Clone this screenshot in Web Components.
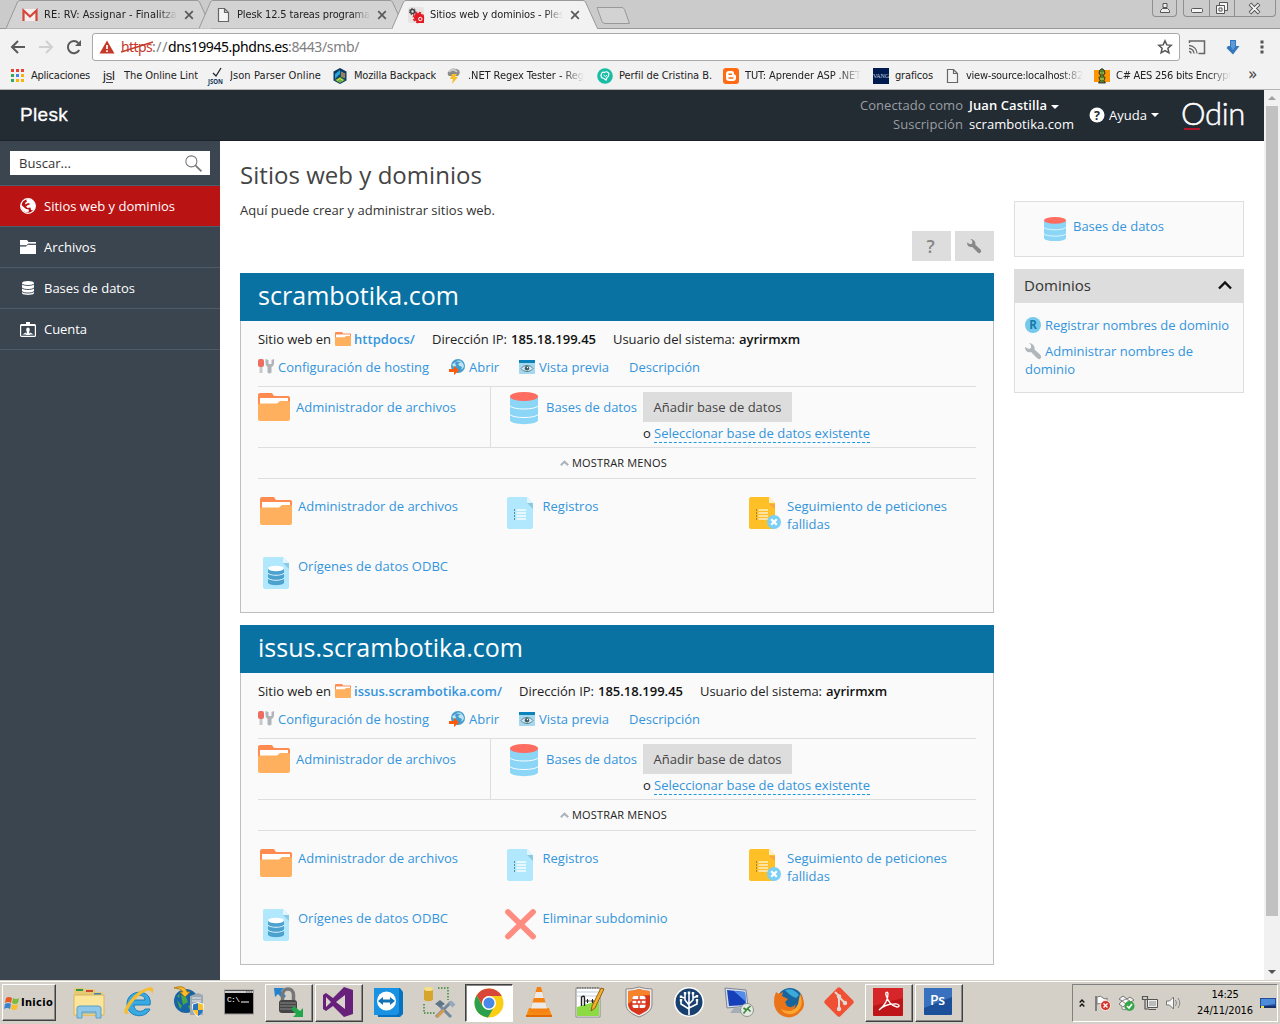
<!DOCTYPE html>
<html lang="es">
<head>
<meta charset="utf-8">
<title>Sitios web y dominios - Plesk</title>
<style>
html,body{margin:0;height:100%;overflow:hidden;background:#fff}
</style>
</head>
<body>
<desktop-screen></desktop-screen>
<script>
const ICONS = {
gmail:['0 0 16 16','<rect x="1" y="2" width="14" height="12" fill="#f4eeee"/><path d="M1.500 14V3.500l6.500 6 6.500-6V14" fill="none" stroke="#d44638" stroke-width="2.200"/>'],
page:['0 0 16 16','<path d="M3.5 1.5h6l4 4v9h-10z M9.500 1.500v4h4" fill="#f4f4f4" stroke="#666" stroke-width="1.2"/>'],
gears:['0 0 16 16','<rect width="16" height="16" rx="2" fill="#e8e4e4"/><circle cx="4.500" cy="4.500" r="2" fill="none" stroke="#444" stroke-width="1.600"/><circle cx="4.500" cy="4.500" r="3.200" fill="none" stroke="#444" stroke-width="1" stroke-dasharray="1.500 1.200"/><circle cx="10.500" cy="10.500" r="4.500" fill="#e31b23"/><circle cx="10.500" cy="10.500" r="5" fill="none" stroke="#e31b23" stroke-width="1.600" stroke-dasharray="2.200 1.700"/><path d="M9 9h7v7H9z" fill="#e31b23"/><circle cx="12.300" cy="12" r="1.700" fill="none" stroke="#fff"/>'],
close:['0 0 10 10','<path d="M1.200 1.200l7.600 7.600M8.800 1.200L1.200 8.800" stroke="#5a5a5a" stroke-width="1.700"/>'],
back:['0 0 16 16','<path d="M15 8H2.500M8 2L2 8l6 6" fill="none" stroke="#5a5a5a" stroke-width="2"/>'],
fwd:['0 0 16 16','<path d="M1 8h12.500M8 2l6 6-6 6" fill="none" stroke="#d0d0d0" stroke-width="2"/>'],
reload:['0 0 16 16','<path d="M13.200 11A6 6 0 1 1 12.300 4" fill="none" stroke="#5a5a5a" stroke-width="2"/><path d="M15 1v6H9z" fill="#5a5a5a"/>'],
warn:['0 0 16 14','<path d="M8 .5L15.500 13.500H.5z" fill="#c53929"/><path d="M8 5v4M8 10.300v1.800" stroke="#fff" stroke-width="1.700"/>'],
star:['0 0 16 16','<path d="M8 1.800l1.800 4.100 4.400.4-3.300 3 1 4.500L8 11.500l-3.900 2.300 1-4.500-3.300-3 4.400-.4z" fill="none" stroke="#555" stroke-width="1.500"/>'],
cast:['0 0 18 16','<path d="M1.500 4V2h15v12.500h-6" fill="none" stroke="#666" stroke-width="1.500"/><path d="M1 6.500a8 8 0 0 1 8 8M1 9.500a5 5 0 0 1 5 5M1 12.500a2 2 0 0 1 2 2" fill="none" stroke="#666" stroke-width="1.300"/>'],
down:['0 0 14 16','<path d="M4 1h6v6h3.500L7 15.500 .5 9l1.500-2h2z" fill="#3479bd"/><path d="M5 2h4v6l-2 3-2-3z" fill="#5c9bd5"/>'],
dots:['0 0 4 14','<path d="M.5.500h3v3h-3zM.5 5.500h3v3h-3zM.5 10.500h3v3h-3z" fill="#555"/>'],
apps:['0 0 13 13','<path d="M0 0h3v3H0zM5 0h3v3H5zM10 0h3v3h-3z" fill="#ea4335"/><path d="M0 5h3v3H0zM0 10h3v3H0z" fill="#34a853"/><path d="M5 5h3v3H5z" fill="#4285f4"/><path d="M10 5h3v3h-3zM5 10h3v3H5zM10 10h3v3h-3z" fill="#fbb30c"/>'],
jsl:['0 0 16 16','<text x="1" y="12" font-size="13" font-family="Liberation Sans" textLength="12">jsl</text><path d="M4 14.500h7" stroke="#444"/>'],
json:['0 0 16 16','<path d="M5 5l3 3 5-8" fill="none" stroke="#223" stroke-width="1.300"/><text x="0" y="15.500" font-size="6.500" font-weight="bold" font-family="Open Sans" fill="#12395c" textLength="15" lengthAdjust="spacingAndGlyphs">JSON</text>'],
moz:['0 0 16 16','<path d="M8 0l6.500 3.500v9L8 16l-6.500-3.500v-9z" fill="#113a60"/><path d="M3 11V6l5-4v4z" fill="#27a6de"/><path d="M8.500 2.500l5 3v5l-5-1z" fill="#175f96"/><path d="M10 9V4M12 10V5" stroke="#f49a28" stroke-width="1.200"/><path d="M3 12l5-3 5 3-5 3z" fill="#6eb04a"/><path d="M5 12.500l3-2 3 2" fill="none" stroke="#e9e238"/>'],
storm:['0 0 16 16','<path d="M3 8a3 3 0 0 1 0-5C5 0 8 0 10 1c4 0 5 4 2 7z" fill="#8a8a8a"/><path d="M3 4c2-3 6-3 8 0" stroke="#ccc" stroke-width="2" fill="none"/><path d="M6 6h5L9 9h3l-6 7 1-5H4z" fill="#f7bd28"/>'],
perfil:['0 0 16 16','<circle cx="8" cy="8" r="7.800" fill="#19bda5"/><path d="M4.500 5.500q1-2 3-1 2-1.500 3.500 0 1.500 1 .5 3 0 1.500-1.500 2l-1 2.500-2-1.500-2.500-1-.5-2z" fill="none" stroke="#fff" stroke-width="1.200"/><path d="M6.500 7l2 1.500L10 7" fill="none" stroke="#fff"/>'],
blogger:['0 0 16 16','<rect width="16" height="16" rx="3" fill="#ff6b12"/><path d="M6 3h2.500A2.700 2.700 0 0 1 11 6c0 1 2 .5 2 2v2a3 3 0 0 1-3 3H6a3 3 0 0 1-3-3V6a3 3 0 0 1 3-3z" fill="#fff"/><path d="M6 6.300h2.500M6 10h4" stroke="#ff6b12" stroke-width="1.400" stroke-linecap="round"/>'],
vang:['0 0 16 16','<rect width="16" height="16" fill="#001b4f"/><text x="0" y="10" fill="#c9d2e2" font-family="Liberation Serif" font-size="6" textLength="16">VANG</text>'],
goblin:['0 0 16 16','<rect y="2" width="16" height="12" fill="#ff9500"/><path d="M8 .5q3 1 3 4.500-.5 2-2 2.500l2 2-1 3 1.500 2.500h-7L6 12.500 5 9.500l2-2Q5.500 7 5 5q0-3.500 3-4.500z" fill="#557f2b" stroke="#222" stroke-width=".8"/><path d="M6 5h1.500M8.500 5H10M6 11h4" stroke="#d5e66b"/>'],
user:['0 0 12 12','<path d="M4 1.500h4v4H4zM1.500 10.500v-2l2-2h5l2 2v2z" fill="#eee" stroke="#555"/>'],
min:['0 0 12 12','<rect x=".5" y="6.500" width="11" height="4" rx="1" fill="#f5f5f5" stroke="#555"/>'],
max:['0 0 12 12','<path d="M3.500.5h8v8h-8z" fill="#f5f5f5" stroke="#555"/><path d="M.5 3.500h8v8h-8z" fill="#f5f5f5" stroke="#555"/><path d="M3 6h3v3H3z" fill="#f5f5f5" stroke="#555"/>'],
wclose:['0 0 12 12','<path d="M1 1l10 10M11 1L1 11" stroke="#555" stroke-width="4"/><path d="M1.500 1.500l9 9M10.500 1.500l-9 9" stroke="#f5f5f5" stroke-width="2"/>'],
help:['0 0 16 16','<circle cx="8" cy="8" r="7.500" fill="#fff"/><text x="8" y="12.500" font-size="12.500" font-weight="bold" text-anchor="middle" font-family="Open Sans" fill="#232b33">?</text>'],
search:['0 0 16 16','<circle cx="6" cy="6" r="5.200" fill="none" stroke="#777" stroke-width="1"/><path d="M9.800 9.800L15.500 15.500" stroke="#777" stroke-width="1.600"/>'],
globe:['0 0 16 16','<circle cx="8" cy="8" r="7.300" fill="none" stroke="#fff" stroke-width="1.300"/><path d="M6 1.500Q10 0 13 3q3 3 2 7l-2 2.500-2-.5-.5-2.500-3 .5-1.500-1.500 2-1.500 2-.5-1-1.500-2 .5-1.500 1-.5-1.500 2-1.500z M1 6.500l2 2 3 2.500 3 .5-.5 2.500-2 .5Q2 13 1 9z" fill="#fff"/>'],
wfolder:['0 0 16 14','<path d="M0 0h7l1.500 2H16v2H9L7 6H0z" fill="#fff"/><path d="M0 6.500h6l2-1.700h8V14H0z" fill="#fff"/><path d="M0 5.600h6.500l1.500-1.500h8" fill="none" stroke="#3a4550" stroke-width=".9"/>'],
wdb:['0 0 12 14','<path d="M0 2v10c0 2.500 12 2.500 12 0V2z" fill="#fff"/><ellipse cx="6" cy="2" rx="6" ry="2" fill="#fff"/><path d="M0 3c2 2 10 2 12 0M0 7c2 2 10 2 12 0M0 10.500c2 2 10 2 12 0" fill="none" stroke="#3a4550" stroke-width=".9"/>'],
badge:['0 0 16 15','<path d="M6 0h4v4H6z" fill="#fff"/><rect x=".6" y="2.600" width="14.800" height="11.800" rx="1" fill="none" stroke="#fff" stroke-width="1.200"/><path d="M1 2h14v2H1z" fill="#fff"/><path d="M8 5.500c2 0 2.300 3 1 4.500l1.500 3h-5L7 10c-1.300-1.500-1-4.500 1-4.500z" fill="#fff"/><path d="M2.500 12.500l3-2 1 2zM13.500 12.500l-3-2-1 2z" fill="#fff"/>'],
folder:['0 0 32 28','<path d="M0 2a2 2 0 0 1 2-2h12l2 3h14a2 2 0 0 1 2 2v9H0z" fill="#ff8b50"/><path d="M2 5h28v8H2z" fill="#fff"/><path d="M0 11.500l1-1h18l3-2.500h9l1 1V26a2 2 0 0 1-2 2H2a2 2 0 0 1-2-2z" fill="#ffb05e"/>'],
db:['0 0 28 32','<path d="M0 4v24c0 5.500 28 5.500 28 0V4z" fill="#8bd5f7"/><ellipse cx="14" cy="4.500" rx="14" ry="4.500" fill="#ff6c60"/><path d="M0 14c3 4 25 4 28 0M0 22.500c3 4 25 4 28 0" fill="none" stroke="#f7fcff" stroke-width="1"/>'],
doc:['0 0 26 32','<path d="M2 0h18l6 6v24a2 2 0 0 1-2 2H2a2 2 0 0 1-2-2V2a2 2 0 0 1 2-2z" fill="#b2e8fe"/><path d="M20 0l6 6h-6z" fill="#e0f5fd"/><path d="M20 6h6v6z" fill="#8bc9e2"/><path d="M9.500 13h9.500M9.500 16h9.500M9.500 19h9.500M9.500 22h9.500" stroke="#e7f8fe" stroke-width="1.800"/><path d="M7.500 12v12" stroke="#5d8fa3" stroke-dasharray="2 1"/>'],
odbc:['0 0 26 32','<path d="M2 0h18l6 6v24a2 2 0 0 1-2 2H2a2 2 0 0 1-2-2V2a2 2 0 0 1 2-2z" fill="#b2e8fe"/><path d="M20 0l6 6h-6z" fill="#e0f5fd"/><path d="M20 6h6v6z" fill="#8bc9e2"/><path d="M5 11v14.500c0 3.500 16 3.500 16 0V11z" fill="#4ba2cf"/><ellipse cx="13" cy="11.500" rx="8" ry="2.700" fill="#fff"/><path d="M5 16c2 3 14 3 16 0M5 21c2 3 14 3 16 0" fill="none" stroke="#e7f8fe" stroke-width="1.100"/>'],
track:['0 0 32 32','<path d="M2 0h18l6 6v24a2 2 0 0 1-2 2H2a2 2 0 0 1-2-2V2a2 2 0 0 1 2-2z" fill="#ffc027"/><path d="M20 0l6 6h-6z" fill="#fff1cb"/><path d="M20 7h6v5z" fill="#f7a540"/><path d="M9.500 13h9.500M9.500 16h9.500M9.500 19h9.500M9.500 22h9.500" stroke="#ffe3a0" stroke-width="1.800"/><path d="M7.500 12v12" stroke="#a98332" stroke-dasharray="2 1"/><circle cx="25" cy="25" r="7" fill="#79cff4"/><path d="M22.200 22.200l5.600 5.600M27.800 22.200l-5.600 5.600" stroke="#fff" stroke-width="2.300"/>'],
remove:['0 0 32 32','<path d="M4 3l25 24.500M29 3L4 27.500" stroke="#ff8c80" stroke-width="5.800" stroke-linecap="round"/>'],
tools:['0 0 16 16','<path d="M0 2q0-2 2-2h2q2 0 2 2v4q0 2-2 2H2Q0 8 0 6z" fill="#ed6d61"/><path d="M1.500 8h3v6h-3z" fill="#c6cacd"/><path d="M7.500 0v4c0 2 1 3 2 4v5.500q2 2 4 0V8c2-1 2.500-2 2.500-4V0l-2.500 1v4h-3V1z" fill="#aeb4b9"/>'],
open:['0 0 16 16','<circle cx="9" cy="7" r="7" fill="#459ccb"/><path d="M7 2.500q3-2 6 .5l-2 .5-2 1.500 1 1.500 3 1.500-1 3q3-2 3-4-1-4-3-4M3.500 5Q3 8 6 7.500l1.500-1-1.500-1.500 1-2z" fill="#bce4f5"/><path d="M0 10h5V7l5 4.500L5 16v-3H0z" fill="#ff5b0b"/>'],
preview:['0 0 16 14','<rect width="16" height="14" rx="1" fill="#a3d8ee"/><path d="M0 0h16v3H0z" fill="#0c83ba"/><path d="M2 8.500c3-4 9-4 12 0-3 4-9 4-12 0z" fill="#d8eef7" stroke="#5f7d8a"/><circle cx="8" cy="8.300" r="2.300" fill="#3b5c6b"/><circle cx="8.500" cy="7.500" r=".7" fill="#fff"/>'],
wrench:['0 0 16 16','<path d="M4 0l2 2v3L4 6 0 4c0 4 3 6 6 5l6 6q2 2 3.500.5t0-3.500L9.500 6.500C10.500 3 7 0 4 0z"/>'],
up:['0 0 14 10','<path d="M1 8.500l6-6 6 6" fill="none" stroke="#111" stroke-width="2.400"/>'],
smallup:['0 0 9 6','<path d="M.8 5.200l3.700-3.500 3.700 3.500" fill="none" stroke="#abb4bb" stroke-width="2"/>'],
reg:['0 0 16 16','<circle cx="8" cy="8" r="8" fill="#75c9ec"/><text x="8" y="12" font-family="Open Sans" font-size="11.500" font-weight="bold" text-anchor="middle" fill="#147baa">R</text>'],
win:['0 0 16 16','<path d="M2 3q3-2 6 0L7 8Q4 6 1 8z" fill="#e95827"/><path d="M9 3q3 2 6 0l-1 5q-3 2-6 0z" fill="#7aba3c"/><path d="M1 9q3-2 6 0l-1 5q-3-2-6 0z" fill="#3d82cf"/><path d="M8 9q3 2 6 0l-1 5q-3 2-6 0z" fill="#fabe2a"/>'],
explorer:['0 0 32 32','<path d="M1 5l1-3h9l2 3V3h8l2 3h7v24H1z" fill="#e7c873"/><path d="M3 3h7v2H3z" fill="#31994a"/><path d="M13 4h7v2h-7z" fill="#c64a35"/><path d="M21 7h7v2h-7z" fill="#3e86bc"/><path d="M1 9h30v20H1z" fill="#fae59b" stroke="#d9b762"/><path d="M4 32V22q0-2 3-2h18q3 0 3 2v10h-5v-6H9v6z" fill="#8fc8e8" stroke="#5d9fc8"/><path d="M9 27h14" stroke="#5d9fc8"/>'],
ie:['0 0 32 32','<path d="M27 19H11c0 7 8 8 11 4h5C22 34 4 31 4 18S21 3 26 11q2 4 1 8z M11 14h11c0-6-10-7-11 0z" fill="#39a9e2" stroke="#1680bc" fill-rule="evenodd"/><path d="M3 28C-3 27 9 6 24 2c6-2 8 1 5 6 0-9-16 1-23 14-2 4-2 7 2 5z" fill="#f5bd31"/>'],
iis:['0 0 32 32','<circle cx="13" cy="15" r="12" fill="#1965a4"/><path d="M8 9l5 2 2 5-5 3zM4 14l5 6-2 3zM15 20l6-2-3 8zM4 10l3-2-1 4z" fill="#48a54a"/><path d="M1 2c8-3 12 0 13 4h3l-5 5-5-5h3C9 4 5 2 1 2z" fill="#f8bc2c" stroke="#b47a0e"/><path d="M17 10l8-3 5 2v20H17z" fill="#9ea9b2"/><path d="M19 12h9M19 15h9" stroke="#e5eaee"/><path d="M19 18l6-2 6 2c0 7-2 10-6 13-4-3-6-6-6-13z" fill="#fff"/><path d="M25 17l5 1.500V24h-5z M20 24h5v6c-3-2-4-4-5-6z" fill="#f9c22b"/><path d="M25 17l-5 1.500V24h5z M25 24h5c0 2-2 5-5 6z" fill="#2874c2"/>'],
cmd:['0 0 32 32','<rect x="1.500" y="4" width="29" height="24" fill="#000" stroke="#999"/><path d="M2 5h28v2H2z" fill="#ccc"/><path d="M23 6h6" stroke="#555" stroke-dasharray="1.500 .8"/><text x="4" y="16" font-size="8" fill="#fff" font-family="Liberation Mono" textLength="13">C:\\</text><path d="M18 16h8" stroke="#fff"/>'],
lock:['0 0 32 32','<path d="M2 2h10l-3 3 5 5-3 3-5-5-3 3z" fill="#2482ce"/><path d="M10.500 16V9c0-8 11-8 11 0v7" fill="none" stroke="#777" stroke-width="3.500"/><rect x="7" y="14" width="18" height="13" rx="3" fill="#454545"/><path d="M8 17h16M8 20h16M8 23h16" stroke="#888"/><path d="M31 31H21l3-3-5-5 3-3 6 5 3-3z" fill="#22a64b"/>'],
vs:['0 0 32 32','<path d="M22 1l9 3v24l-9 3L11 20l-7 5-3-2V9l3-2 7 5z" fill="#68217a"/><path d="M4 11v10l5-5zM14 16l9-7v14z" fill="#d9d4cd"/>'],
tv:['0 0 32 32','<path d="M2 2h25l3 4v22l-3 3H5z" fill="#0772c0"/><path d="M1 2h25v25l-3 2H1z" fill="#1a92e4"/><circle cx="13.500" cy="15" r="9.500" fill="#fff"/><path d="M5 15l5-4v2.500h7V11l5 4-5 4v-2.500h-7V19z" fill="#1272b3"/>'],
dbtools:['0 0 32 32','<path d="M1 3v10c0 3 9 3 9 0V3z" fill="#d6a62c"/><ellipse cx="5.500" cy="3" rx="4.500" ry="2" fill="#f7e085"/><path d="M15 2h10v12M1 18v9h12" fill="none" stroke="#33852f" stroke-width="1.400" stroke-dasharray="1.500 1.500"/><path d="M14 17l14 14M28 16L13 31" stroke="#73889a" stroke-width="3"/><path d="M12 18l5-4 5 4-5 3z" fill="#5c7688"/><path d="M27 16l4 4" stroke="#93a8b8" stroke-width="4"/><path d="M21 24l-7 7" stroke="#d99a51" stroke-width="3"/>'],
chrome:['0 0 32 32','<circle cx="16" cy="16" r="14.500" fill="#fbcd14"/><path d="M16 1.500A14.500 14.500 0 0 1 28.700 9H16a7 7 0 0 0-6 10L3.500 8.500A14.500 14.500 0 0 1 16 1.500z" fill="#d9463a"/><path d="M3.500 8.500A14.500 14.500 0 0 0 15 30.400l6.300-11a7 7 0 0 1-11.500-.4z" fill="#2ba14e"/><circle cx="16" cy="16" r="7" fill="#fff"/><circle cx="16" cy="16" r="5.500" fill="#4888e8"/>'],
vlc:['0 0 32 32','<path d="M6 22h20l3 8-1 1H4l-1-1z" fill="#f58b13"/><path d="M14 1h4l7 24c-4 3-14 3-18 0z" fill="#f58213"/><path d="M12.700 6h6.600l1.700 6H11zM9.500 16.500h13l1.700 6H7.800z" fill="#eceae6"/><path d="M3 30h26" stroke="#e36b05" stroke-width="2"/>'],
npp:['0 0 32 32','<path d="M3 2h24v29H3z" fill="#fff" stroke="#888"/><path d="M4 6h22M4 10h22" stroke="#bfcfda"/><path d="M4 21q11-3 22-7v16H4z" fill="#8ddb42"/><path d="M4 2h22" stroke="#555" stroke-dasharray="1.500 1"/><path d="M8.500 20V11q3-2 3 1v8" fill="none" stroke="#222" stroke-width="1.400"/><path d="M12.500 15h4m-2-2v4M17.500 15h4m-2-2v4" stroke="#222"/><path d="M18 25l1-5L28 2l3 1-9 19z" fill="#f3b12d" stroke="#975e13"/>'],
shield:['0 0 32 32','<path d="M16 1q6 2 13 2v15c0 7-6 10-13 13C9 28 3 25 3 18V3q7 0 13-2z" fill="#eee" stroke="#888"/><path d="M16 3q5 2 11 2v13c0 6-5 8-11 11C10 26 5 24 5 18V5q6 0 11-2z" fill="#d8361c"/><path d="M5 5q6 0 11-2 5 2 11 2v4Q15 9 5 18z" fill="#f5832b"/><rect x="9.500" y="10" width="13" height="12" rx="2" fill="#fff"/><path d="M9 14h14M9 18h14M14 14v4M18 14v4M16 10v4M16 18v4" stroke="#d8361c" stroke-width="1.300"/>'],
tree:['0 0 32 32','<circle cx="16" cy="16" r="15" fill="#fff"/><circle cx="16" cy="16" r="13.500" fill="#17406f"/><path d="M16 29V16M16 22l8-4v-4M16 18l4-4V7M16 23l-8-5v-4M16 19l-4-5V7M12 12l-4-1M20 12l4-2M16 16V7" fill="none" stroke="#fff" stroke-width="1.600"/><path d="M14.800 5.500h2.400v2.400h-2.400zM10.800 6h2.400v2.400h-2.400zM18.800 6h2.400v2.400h-2.400zM6.800 13h2.400v2.400H6.800zM22.800 13h2.400v2.400h-2.400zM6.800 9.500h2.400v2.400H6.800zM22.800 9h2.400v2.400h-2.400z" fill="#fff"/>'],
remote:['0 0 32 32','<path d="M2 2l21 2 2 16-21 2z" fill="#d8dee6" stroke="#79859b"/><path d="M4 4l18 2 1 13-17 1z" fill="#1540ba"/><path d="M11 5l11 1 1 10z" fill="#548ceb"/><path d="M11 22h7l4 5H7z" fill="#a6adb7"/><circle cx="24" cy="24" r="6.500" fill="#e5e8e4" stroke="#8a9588"/><path d="M20.500 22l3 2-3 3.500M27.500 20l-3 2.500 3 3" fill="none" stroke="#358735" stroke-width="1.600"/>'],
firefox:['0 0 32 32','<circle cx="17" cy="15" r="13" fill="#18659d"/><path d="M12 4q8-3 14 5l-3 3q-7-3-11-8z" fill="#3baada"/><path d="M3 6l3 2 4-2-1 4 6 3-3 3 2 4q5 3 9-2l-2 6q8-3 6-17 8 12 0 19C18 37 1 30 1 16q0-6 2-10z" fill="#ea7419"/><path d="M27 8q5 13-5 19c-6 3-12 0-14-4q12 6 17-5z" fill="#fba62f"/>'],
git:['0 0 32 32','<rect x="5" y="5" width="22" height="22" rx="2" fill="#f05033" transform="rotate(45 16 16)"/><path d="M12 6l4 4v13M16 11l6 6" fill="none" stroke="#dedbd3" stroke-width="2"/><circle cx="16" cy="10.500" r="2.200" fill="#dedbd3"/><circle cx="22" cy="17" r="2.200" fill="#dedbd3"/><circle cx="16" cy="23" r="2.200" fill="#dedbd3"/>'],
acrobat:['0 0 32 32','<rect x="1" y="2" width="30" height="28" rx="1" fill="#bd1518"/><path d="M1 2h30v10L1 20z" fill="#d6262a"/><path d="M7 24c5-4 9-10 9-16 0-3-3-2-2 1 2 7 6 11 11 12 4 0 2-4-3-3-6 0-11 2-15 6z" fill="none" stroke="#fff" stroke-width="1.300"/>'],
ps:['0 0 32 32','<rect x="2" y="2" width="28" height="27" rx="1" fill="#1b4f9a"/><path d="M2 2h28v9L2 22z" fill="#3871bd"/><text x="8" y="19" font-size="14" font-family="Open Sans" font-weight="600" fill="#fff" textLength="15">Ps</text>'],
chev:['0 0 6 10','<path d="M.7 4.500L3 2l2.300 2.500M.7 8.500L3 6l2.300 2.500" fill="none" stroke="#111" stroke-width="1.400"/>'],
flag:['0 0 17 16','<path d="M2 1v15" stroke="#666" stroke-width="1.500"/><path d="M3 2q4-2 6 1 2 2 4 0v7q-3 2-5-1-2-1-5 0z" fill="#fff" stroke="#777"/><circle cx="11.500" cy="10.500" r="5" fill="#d6342c" stroke="#fff" stroke-width=".8"/><path d="M9.500 8.500l4 4M13.500 8.500l-4 4" stroke="#fff" stroke-width="1.400"/>'],
dropbox:['0 0 17 16','<path d="M5 1L1 4l3 2-3 3 4 3 4-3 4 3v-5l3-2-4-3-3 2z" fill="#f2f2f2" stroke="#777"/><path d="M4 6l4-2 4 2-4 3zM4 11v3l4 1" fill="#fff" stroke="#888"/><circle cx="11.500" cy="11" r="5" fill="#35a749"/><path d="M9 11l2 2 3-4" fill="none" stroke="#fff" stroke-width="1.600"/>'],
net:['0 0 16 16','<path d="M5.500 4.500h10v8h-10z" fill="#eee" stroke="#555"/><path d="M7 6h7v5H7z" fill="#bbb"/><path d="M.500 1.500h5v3h-5zM3 4v10h4M7 14.500h7" fill="none" stroke="#555" stroke-width="1.200"/>'],
sound:['0 0 17 16','<path d="M1.500 6h3l4-4v12l-4-4h-3z" fill="#f7f7f7" stroke="#777"/><path d="M10.500 5q2 3 0 6M13 3q3.500 5 0 10" fill="none" stroke="#888"/>'],
show:['0 0 16 12','<path d="M0 1h16v10H0z" fill="#244e9b"/><path d="M1 2h14v5L1 9z" fill="#4c8cd8"/><path d="M0 10h16" stroke="#163166" stroke-width="2"/><path d="M1 9h3v2H1z" fill="#f5dc4d"/>']
};

/* Registers a custom element whose shadow root holds fixed CSS and markup. */
const make = (name, css, html) => customElements.define(name, class extends HTMLElement {
  constructor(){
    super();
    this.attachShadow({mode:'open'});
  }
  connectedCallback(){
    if (this.ready) return;
    this.ready = true;
    const body = typeof html === 'function' ? html(k => this.getAttribute(k) || '', this) : html;
    this.shadowRoot.innerHTML = `<style>*{box-sizing:border-box}:host{box-sizing:border-box}${css}</style>${body}`;
  }
});
const icon = (n, w, h = w) => `<ui-icon name="${n}" style="width:${w}px;height:${h}px"></ui-icon>`;

make('ui-icon', ':host{display:inline-block;flex:none}svg{display:block;width:100%;height:100%;overflow:visible}', a => {
  const [vb, body] = ICONS[a('name')];
  return `<svg viewBox="${vb}" preserveAspectRatio="none" fill="currentColor">${body}</svg>`;
});

/* ---------- Browser chrome ---------- */
make('browser-tab', `
:host{display:block;position:relative;width:193px;height:29px;flex:none}
:host([active]){z-index:2}
.bg{position:absolute;left:0;top:0;width:206px;height:29px}
.row{position:relative;display:flex;align-items:center;height:28px;padding:1px 0 0 16px}
.t{margin-left:6px;width:133px;overflow:hidden;-webkit-mask:linear-gradient(90deg,#000 115px,transparent 133px);margin-right:7px}`,
a => `<svg class="bg" viewBox="0 0 206 29"><path d="M0 28.500 11.500 2Q12.500 .5 14 .5H191Q192.500 .5 193.500 2L205.500 28.500" fill="${a('active')?'#f2f2f2':'#d3d3d3'}" stroke="#999"/>${a('active')?'<path d="M1 28.500h204" stroke="#f2f2f2" stroke-width="1.500"/>':''}</svg>
<div class="row">${icon(a('icon'),16)}<div class="t"><slot></slot></div>${icon('close',10)}</div>`);

make('window-buttons', `
:host{display:flex;height:17px}
div{height:17px;border:1px solid #8f8f8f;border-top:0;border-radius:0 0 4px 4px;display:flex;align-items:center;justify-content:center}
.u{width:25px;margin-right:6px}.g{width:93px;justify-content:stretch}
.g span{display:flex;align-items:center;justify-content:center;height:16px}
.g span+span{border-left:1px solid #8f8f8f}`,
`<div class="u">${icon('user',12)}</div><div class="g"><span style="width:25px">${icon('min',12)}</span><span style="width:25px">${icon('max',12)}</span><span style="flex:1;padding-right:2px">${icon('wclose',11)}</span></div>`);

make('tab-strip', `
:host{display:flex;height:29px;background:#cbcbcb;padding-left:6px;border-bottom:1px solid #999;font-size:11px}
.new{margin:7px 0 0 10px;width:36px;height:18px}
window-buttons{margin-left:auto;margin-right:4px}`,
`<browser-tab icon="gmail"><fit-text w="133">RE: RV: Assignar - Finalitza</fit-text></browser-tab>
<browser-tab icon="page"><fit-text w="133">Plesk 12.5 tareas programa</fit-text></browser-tab>
<browser-tab icon="gears" active="1"><fit-text w="134">Sitios web y dominios - Ples</fit-text></browser-tab>
<svg class="new" viewBox="0 0 36 18"><path d="M2 .5H27q1.500 0 2.500 2L34.500 16.500H10q-2 0-3-2z" fill="#d3d3d3" stroke="#999"/></svg>
<window-buttons></window-buttons>`);

make('address-bar', `
:host{display:flex;align-items:center;height:35px;padding:0 16px 0 10px;background:#f2f2f2}
.nav{display:flex;gap:12px;width:82px}
.url{display:flex;align-items:center;width:1088px;height:28px;margin-top:1px;border:1px solid #a9a9a9;border-radius:3px;background:#fff;padding:0 6px;font:14px/26px "Noto Sans",sans-serif;color:#808080}
.h{position:relative;margin-left:6px;color:#c53929}.h svg{position:absolute;left:0;top:6px;width:32px;height:14px}
b{font-weight:400;color:#000}
.star{margin-left:auto;display:flex}
.r{display:flex;align-items:center;justify-content:space-between;margin-left:8px;width:76px}`,
`<div class="nav">${icon('back',16)}${icon('fwd',16)}${icon('reload',16)}</div>
<div class="url">${icon('warn',16,14)}<span class="h"><fit-text w="31">https</fit-text><svg viewBox="0 0 32 14"><path d="M0 12L32 2" stroke="#c53929" stroke-width="1.500"/></svg></span><fit-text w="16">://</fit-text><b><fit-text w="120">dns19945.phdns.es</fit-text></b><fit-text w="71">:8443/smb/</fit-text><span class="star">${icon('star',16)}</span></div>
<div class="r">${icon('cast',18,16)}${icon('down',14,16)}${icon('dots',4,14)}</div>`);

make('book-mark', `:host{display:flex;align-items:center;height:24px}
ui-icon{margin-top:-1px}
span{margin:-2px 0 0 6px;overflow:hidden;white-space:nowrap}
:host([icon=apps]) span{margin-left:7px}
:host([fade]) span{-webkit-mask:linear-gradient(90deg,#000 calc(100% - 22px),transparent)}`,
a => `${icon(a('icon'),a('icon')==='apps'?13:16)}<span><slot></slot></span>`);

make('bookmarks-bar', `
:host{display:flex;height:26px;background:#f2f2f2;border-bottom:1px solid #b4b4b4;font-size:11px;padding-left:11px}
book-mark{flex:none}
.more{font-size:17px;line-height:20px;margin-left:17px;color:#444}`,
[['apps','Aplicaciones',59,0,91],['jsl','The Online Lint',74,0,106],['json','Json Parser Online',91,0,124],['moz','Mozilla Backpack',82,0,114],['storm','.NET Regex Tester - Reg',116,1,151],['perfil','Perfil de Cristina B.',93,0,126],['blogger','TUT: Aprender ASP .NET',116,1,150],['vang','graficos',38,0,71],['page','view-source:localhost:82',117,1,150],['goblin','C# AES 256 bits Encrypt',116,1,137]]
.map(b => `<book-mark icon="${b[0]}" ${b[3]?'fade':''} style="width:${b[4]}px"><fit-text w="${b[2]}">${b[1]}</fit-text></book-mark>`).join('')+'<span class="more">»</span>');

/* ---------- Plesk ---------- */
make('plesk-header', `
:host{display:flex;height:51px;background:#232b33;border-bottom:1px solid #1c2129;color:#fff;padding-left:20px;align-items:center}
.logo{font:19px "Liberation Sans",sans-serif;margin-top:-1px;-webkit-text-stroke:.3px #fff}
.acc{margin-left:auto;display:grid;grid-template-columns:103px 105px;column-gap:6px;line-height:19px}
.acc span{color:#9a9fa3;text-align:right}
.help{display:flex;align-items:center;margin-left:15px;width:92px}
.help ui-icon{margin-right:4px}
i{display:inline-block;border:4px solid transparent;border-top-color:#fff;border-bottom:0;margin-left:4px;vertical-align:1px}
.odin{width:83px;height:40px;position:relative;font:300 31px/37px Lato,sans-serif;-webkit-text-stroke:.5px #fff}
.odin u{position:absolute;left:3px;top:33px;width:16px;height:2px;background:#b2142c}`,
`<span class="logo"><fit-text w="48">Plesk</fit-text></span>
<div class="acc"><span><fit-text w="103">Conectado como</fit-text></span><div style="font-weight:600"><fit-text w="78">Juan Castilla</fit-text><i></i></div><span><fit-text w="70">Suscripción</fit-text></span><div style="font-weight:500"><fit-text w="105">scrambotika.com</fit-text></div></div>
<div class="help">${icon('help',16)}<fit-text w="38">Ayuda</fit-text><i></i></div>
<div class="odin"><fit-text w="64">Odin</fit-text><u></u></div>`);

make('nav-item', `
:host{display:flex;align-items:center;height:41px;padding-left:20px;border-bottom:1px solid #4d5c6a;color:#fff;font-weight:500}
:host([active]){background:#ba1313}
span{width:16px;margin-right:8px;display:flex;justify-content:center}`,
a => `<span>${icon(a('icon'),+a('iw'),+a('ih'))}</span><slot></slot>`);

make('side-bar', `
:host{display:block;width:220px;background:#3a4550;padding-top:10px;flex:none}
.s{display:flex;align-items:center;justify-content:space-between;margin:0 10px 10px;height:24px;background:#fff;padding:0 8px 0 9px;color:#333}
nav{border-top:1px solid #4d5c6a}`,
`<div class="s"><fit-text w="52">Buscar...</fit-text>${icon('search',17)}</div>
<nav><nav-item active="1" icon="globe" iw="16" ih="16"><fit-text w="131">Sitios web y dominios</fit-text></nav-item>
<nav-item icon="wfolder" iw="16" ih="14"><fit-text w="52">Archivos</fit-text></nav-item>
<nav-item icon="wdb" iw="12" ih="14"><fit-text w="91">Bases de datos</fit-text></nav-item>
<nav-item icon="badge" iw="16" ih="15"><fit-text w="43">Cuenta</fit-text></nav-item></nav>`);

make('tool-tile', `
:host{display:flex;height:60px;color:#3495dc}
.i{width:32px;margin-right:6px;display:flex;justify-content:center;align-items:flex-start}
:host([icon=doc]) .i,:host([icon=remove]) .i{margin-right:6.500px}
.t{line-height:18px}`,
a => `<div class="i">${icon(a('icon'),+a('iw'),+a('ih'))}</div><div class="t"><slot></slot></div>`);

make('domain-panel', `
:host{display:block;width:754px;height:340px;margin-bottom:12px;background:#fafafa;border:1px solid #bfbfbf;border-top:0}
header{height:48px;margin:0 -1px;background:#0972a3;color:#fff;font-size:25px;line-height:45px;padding-left:18px}
.b{padding:0 17px}
.r{display:flex;align-items:center;height:28px;white-space:pre}
.r1{margin-top:4px}.r1>ui-icon{margin:0 3px 0 4px}
a{color:#3495dc;text-decoration:none}
b{font-weight:600;color:#111;margin-left:4px}
.l{display:flex;align-items:center;gap:4px;margin-right:20px}
.l ui-icon{margin-top:-1px}
.main{display:flex;height:62px;margin-top:5px;border:1px solid #dedede;border-width:1px 0}
.m1{display:flex;width:233px;border-right:1px solid #dedede;padding-top:6px}
.m1 a{margin:5px 0 0 6px}
.m2{display:flex;padding:5px 0 0 19px}
.m2>a{margin:6px 6px 0 8px}
.btn{display:flex;align-items:center;justify-content:center;width:149px;height:30px;background:#ddd;color:#444}
.or{line-height:18px;margin-top:2px;display:flex;gap:4px}
.or a{border-bottom:1px dashed #1b9ae0}
.less{height:31px;border-bottom:1px solid #dedede;display:flex;align-items:center;justify-content:center;gap:3px;font-size:11px;color:#222;padding:0 7px 2px 0}
.less ui-icon{margin-top:2px}
.grid{display:grid;grid-template-columns:244px 245px 1fr;padding:18px 0 0 2px}`,
a => `<header><fit-text w="${a('tw')}">${a('name')}</fit-text></header><div class="b">
<div class="r r1"><fit-text w="73">Sitio web en</fit-text>${icon('folder',16,14)}<a style="font-weight:600"><fit-text w="${a('pw')}">${a('path')}</fit-text></a><span style="width:17px"></span><fit-text w="75">Dirección IP:</fit-text><b><fit-text w="85">185.18.199.45</fit-text></b><span style="width:17px"></span><fit-text w="122">Usuario del sistema:</fit-text><b><fit-text w="61">ayrirmxm</fit-text></b></div>
<div class="r"><a class="l">${icon('tools',16)}<fit-text w="151">Configuración de hosting</fit-text></a><a class="l">${icon('open',16)}<fit-text w="30">Abrir</fit-text></a><a class="l">${icon('preview',16,14)}<fit-text w="70">Vista previa</fit-text></a><a><fit-text w="71">Descripción</fit-text></a></div>
<div class="main"><div class="m1">${icon('folder',32,28)}<a><fit-text w="160">Administrador de archivos</fit-text></a></div>
<div class="m2">${icon('db',28,32)}<a><fit-text w="91">Bases de datos</fit-text></a><div><div class="btn"><fit-text w="128">Añadir base de datos</fit-text></div><div class="or"><fit-text w="7">o</fit-text><a><fit-text w="216">Seleccionar base de datos existente</fit-text></a></div></div></div></div>
<div class="less">${icon('smallup',9,6)}<fit-text w="95">MOSTRAR MENOS</fit-text></div>
<div class="grid"><tool-tile icon="folder" iw="32" ih="28"><fit-text w="160">Administrador de archivos</fit-text></tool-tile>
<tool-tile icon="doc" iw="26" ih="32"><fit-text w="56">Registros</fit-text></tool-tile>
<tool-tile icon="track" iw="32" ih="32"><fit-text w="160">Seguimiento de peticiones</fit-text><br><fit-text w="43">fallidas</fit-text></tool-tile>
<tool-tile icon="odbc" iw="26" ih="32"><fit-text w="150">Orígenes de datos ODBC</fit-text></tool-tile>
${a('sub')?'<tool-tile icon="remove" iw="32" ih="32"><fit-text w="125">Eliminar subdominio</fit-text></tool-tile>':''}</div></div>`);

make('page-main', `
:host{display:block;width:774px;padding:20px 0 0 20px;flex:none}
h1{margin:0;font-size:24px;font-weight:400;line-height:28px;color:#444}
p{margin:12px 0;line-height:18px;height:18px;color:#333}
.tools{display:flex;justify-content:flex-end;gap:4px;height:30px;margin-bottom:12px;color:#888}
.tools div{width:39px;height:30px;background:#ddd;display:flex;align-items:center;justify-content:center;font-size:18px;font-weight:600;padding-right:2px}`,
`<h1><fit-text w="242">Sitios web y dominios</fit-text></h1><p><fit-text w="255">Aquí puede crear y administrar sitios web.</fit-text></p>
<div class="tools"><div>?</div><div>${icon('wrench',14)}</div></div>
<domain-panel name="scrambotika.com" tw="201" path="httpdocs/" pw="61"></domain-panel>
<domain-panel name="issus.scrambotika.com" tw="265" path="issus.scrambotika.com/" pw="148" sub="1"></domain-panel>`);

make('side-panel', `
:host{display:block;width:230px;margin:60px 0 0 20px;color:#3495dc;line-height:18px}
.a{display:flex;height:56px;border:1px solid #dedede;background:#fafafa;padding:15px 0 0 29px;margin-bottom:12px}
.a fit-text{margin:0 0 0 7px}
.h{display:flex;height:34px;background:#ddd;color:#333;font-size:15px;align-items:center;justify-content:space-between;padding:0 12px 2px 10px}
.c{height:90px;border:1px solid #dedede;border-top:0;background:#fafafa;padding:13px 0 0 10px}
.c div{margin-bottom:8px;white-space:nowrap}.c ui-icon{vertical-align:-3px;margin-right:4px}`,
`<div class="a">${icon('db',22,24)}<fit-text w="91">Bases de datos</fit-text></div>
<div class="h"><fit-text w="67">Dominios</fit-text>${icon('up',14,10)}</div>
<div class="c"><div>${icon('reg',16)}<fit-text w="184">Registrar nombres de dominio</fit-text></div><div><span style="color:#b0b6bb">${icon('wrench',16)}</span><fit-text w="148">Administrar nombres de</fit-text><br><fit-text w="50">dominio</fit-text></div></div>`);

make('scroll-bar', `
:host{display:flex;flex-direction:column;align-items:center;justify-content:space-between;width:16px;background:#f1f1f1;padding:6px 0;flex:none}
i{border:4px solid transparent}
.u{border-bottom-color:#a0a0a0;border-top:0}.d{border-top-color:#555;border-bottom:0}
div{width:12px;height:810px;background:#c1c1c1;margin:6px 0 auto}`,
`<i class="u"></i><div></div><i class="d"></i>`);

/* ---------- Taskbar ---------- */
make('task-button', `
:host{display:flex;align-items:center;justify-content:center;width:48px;height:38px;flex:none;padding-bottom:2px}
:host([kind=open]){border:1px solid;border-color:#fff #404040 #404040 #fff;box-shadow:inset -1px -1px #888;padding-right:2px}
:host([kind=on]){border:1px solid;border-color:#404040 #fff #fff #404040;background:#fff;box-shadow:inset 1px 1px #888;padding-bottom:0}`,
a => icon(a('icon'),32));

make('task-bar', `
:host{display:flex;height:44px;background:#d4d0c8;border-top:1px solid #d4d0c8;box-shadow:inset 0 1px #fff;padding:3px 2px 0;font-family:"DejaVu Sans Condensed","DejaVu Sans",sans-serif;color:#000}
.start{display:flex;align-items:center;width:54px;height:37px;border:1px solid;border-color:#fff #404040 #404040 #fff;box-shadow:inset -1px -1px #888;padding-left:1px;font:bold 11px "DejaVu Sans Condensed",sans-serif;gap:1px}
.apps{display:flex;gap:2px;margin-left:9px}
.tray{display:flex;align-items:center;width:206px;height:38px;margin-left:auto;border:1px solid;border-color:#808080 #fff #fff #808080;padding-left:6px}
.tray ui-icon{margin-right:7px}
.clock{margin-left:8px;width:56px;text-align:center;font-size:11px;line-height:16px}
.tray ui-icon:last-child{margin:0 0 0 7px}`,
`<div class="start">${icon('win',16)}<fit-text w="32">Inicio</fit-text></div><div class="apps">${['explorer','ie','iis','cmd','lock:open','vs:open','tv','dbtools','chrome:on','vlc','npp','shield','tree','remote','firefox','git','acrobat:open','ps:open'].map(x=>{const [n,k='']=x.split(':');return `<task-button icon="${n}" kind="${k}"></task-button>`}).join('')}</div>
<div class="tray">${icon('chev',6,10).replace('style="','style="margin-right:9px;')}${icon('flag',17,16)}${icon('dropbox',17,16)}${icon('net',16)}${icon('sound',17,16)}<div class="clock"><fit-text w="27">14:25</fit-text><br><fit-text w="56">24/11/2016</fit-text></div>${icon('show',16,12)}</div>`);

make('desktop-screen', `
:host{display:flex;flex-direction:column;width:1280px;height:1024px;overflow:hidden;font:13px "Open Sans",sans-serif;color:#222}
.chrome{font-family:"DejaVu Sans Condensed","Noto Sans",sans-serif;color:#222;flex:none}
.view{display:flex;height:890px}
.page{width:1264px;display:flex;flex-direction:column;overflow:hidden;background:#fff}
.cols{display:flex;flex:1}
plesk-header{flex:none}`,
`<div class="chrome"><tab-strip></tab-strip><address-bar></address-bar><bookmarks-bar></bookmarks-bar></div>
<div class="view"><div class="page"><plesk-header></plesk-header><div class="cols"><side-bar></side-bar><page-main></page-main><side-panel></side-panel></div></div><scroll-bar></scroll-bar></div>
<task-bar></task-bar>`);

/* Sets its text to a fixed width by spreading the difference over the letters. */
customElements.define('fit-text', class extends HTMLElement {
  connectedCallback(){
    if (this.shadowRoot) return;
    this.attachShadow({mode:'open'}).innerHTML = '<style>:host{display:inline-block;white-space:pre;flex:none}</style><slot></slot>';
    const w = +this.getAttribute('w');
    const n = this.textContent.length;
    const natural = this.getBoundingClientRect().width;
    if (natural) this.style.letterSpacing = ((w - natural) / n) + 'px';
  }
});
</script>
</body>
</html>
